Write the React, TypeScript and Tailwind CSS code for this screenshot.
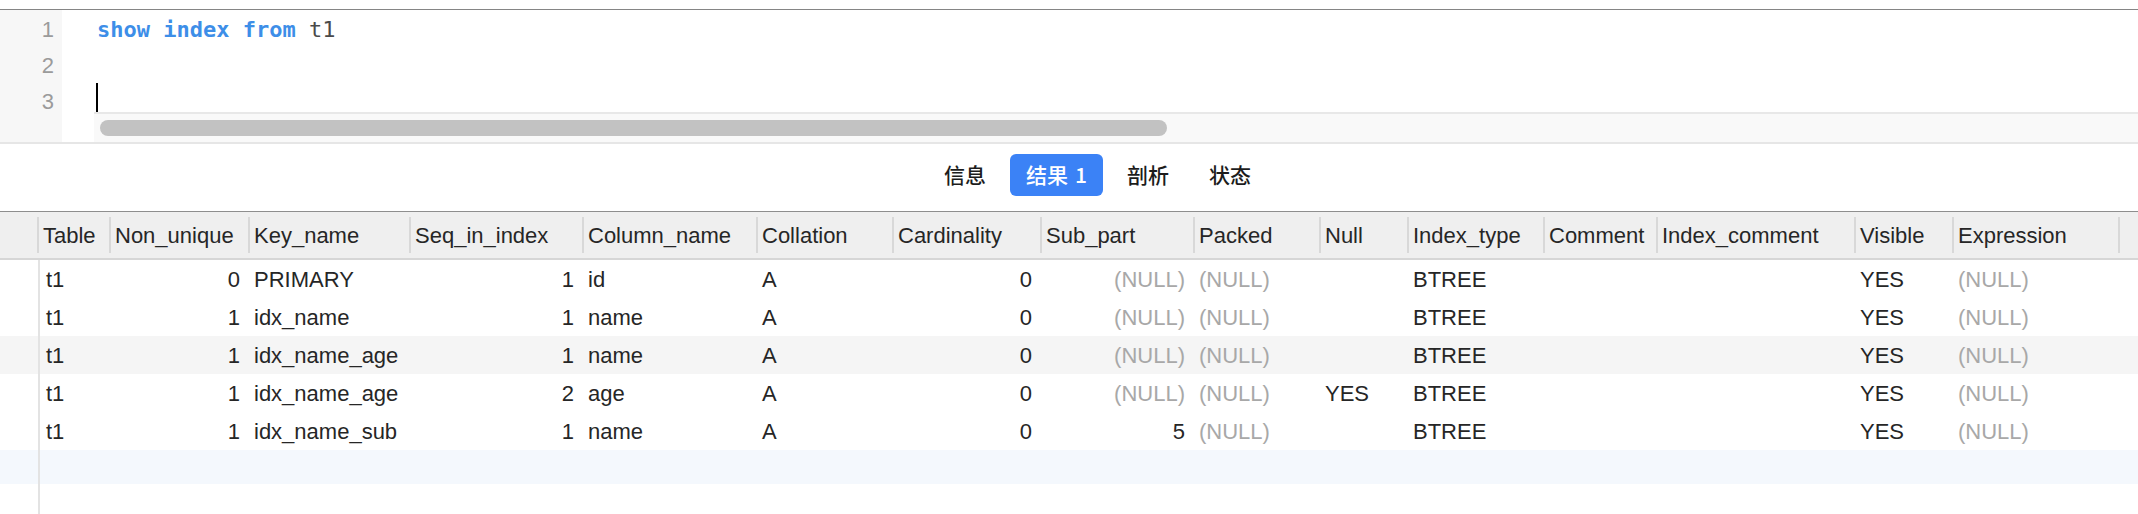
import React from 'react';

type Col = { name: string; width: number; align?: 'right' };

const columns: Col[] = [
  { name: 'Table', width: 72 },
  { name: 'Non_unique', width: 139, align: 'right' },
  { name: 'Key_name', width: 161 },
  { name: 'Seq_in_index', width: 173, align: 'right' },
  { name: 'Column_name', width: 174 },
  { name: 'Collation', width: 136 },
  { name: 'Cardinality', width: 148, align: 'right' },
  { name: 'Sub_part', width: 153, align: 'right' },
  { name: 'Packed', width: 126 },
  { name: 'Null', width: 88 },
  { name: 'Index_type', width: 136 },
  { name: 'Comment', width: 113 },
  { name: 'Index_comment', width: 198 },
  { name: 'Visible', width: 98 },
  { name: 'Expression', width: 166 },
];

const rows: (string | null)[][] = [
  ['t1', '0', 'PRIMARY', '1', 'id', 'A', '0', null, null, '', 'BTREE', '', '', 'YES', null],
  ['t1', '1', 'idx_name', '1', 'name', 'A', '0', null, null, '', 'BTREE', '', '', 'YES', null],
  ['t1', '1', 'idx_name_age', '1', 'name', 'A', '0', null, null, '', 'BTREE', '', '', 'YES', null],
  ['t1', '1', 'idx_name_age', '2', 'age', 'A', '0', null, null, 'YES', 'BTREE', '', '', 'YES', null],
  ['t1', '1', 'idx_name_sub', '1', 'name', 'A', '0', '5', null, '', 'BTREE', '', '', 'YES', null],
];

const tabs = ['信息', '结果 1', '剖析', '状态'];

function Editor() {
  return (
    <>
      <div className="h-[9px]" />
      <div className="h-px bg-[#858585]" />
      <div className="flex h-[132px]">
        <div className="w-[62px] bg-[#f7f7f7] pt-px font-['Liberation_Sans',sans-serif] text-[22px] text-[#9b9b9b]">
          {[1, 2, 3].map(n => (
            <div key={n} className="h-[36px] flex items-center justify-end pr-2">{n}</div>
          ))}
        </div>
        <div className="flex-1 flex flex-col pt-px font-['DejaVu_Sans_Mono',monospace] text-[22px]">
          <div className="h-[36px] flex items-center pl-[35px] whitespace-pre">
            <span className="font-bold text-[#3d8ee8]">show index from</span>
            <span className="text-[#4a4a4a]"> t1</span>
          </div>
          <div className="h-[36px]" />
          <div className="h-[29px] pl-[34px]">
            <div className="w-[2px] h-full bg-black" />
          </div>
          <div className="h-[30px] ml-[32px] border-t-2 border-[#e8e8e8] bg-[#f9f9f9] pt-[6px] pl-[6px]">
            <div className="w-[1067px] h-[16px] rounded-full bg-[#c2c2c2]" />
          </div>
        </div>
      </div>
      <div className="h-[2px] bg-[#e6e6e6]" />
    </>
  );
}

function Tabs() {
  return (
    <div className="h-[67px] flex items-start justify-center gap-2 pt-[10px] pl-[57px] font-['Noto_Sans_CJK_SC',sans-serif] text-[21px] font-medium">
      {tabs.map(t => {
        const active = t === '结果 1';
        const [label, num] = t.split(' ');
        return (
          <div
            key={t}
            className={
              active
                ? 'h-[42px] px-4 flex items-center rounded-[6px] bg-[#3b82f6] text-white'
                : 'h-[42px] px-4 flex items-center text-[#1c1c1c]'
            }
          >
            {label}
            {num && <span className="ml-[7px]">{num}</span>}
          </div>
        );
      })}
    </div>
  );
}

function ResultGrid() {
  return (
    <div className="flex-1 flex flex-col border-t border-[#8e8e8e] font-['Liberation_Sans',sans-serif] text-[22px] text-[#262626]">
      <div className="h-[48px] flex bg-[#efefef] border-b-2 border-[#d6d6d6]">
        <div className="w-[37px]" />
        {columns.map(c => (
          <div key={c.name} className="flex items-center" style={{ width: c.width }}>
            <div className="w-[2px] h-[36px] bg-[#d8d8d8]" />
            <span className="pl-1 whitespace-nowrap">{c.name}</span>
          </div>
        ))}
        <div className="flex-1 flex items-center">
          <div className="w-[2px] h-[36px] bg-[#d8d8d8]" />
        </div>
      </div>

      {rows.map((r, i) => (
        <div key={i} className={i === 2 ? 'h-[38px] flex bg-[#f5f5f5]' : 'h-[38px] flex'}>
          <div className="w-[40px] border-r-2 border-[#e3e3e3]" />
          {columns.map((c, j) => {
            const v = r[j];
            const w = j === 0 ? c.width - 3 : c.width;
            return (
              <div
                key={c.name}
                className={
                  c.align === 'right'
                    ? 'flex items-center justify-end pr-[8px] whitespace-nowrap'
                    : 'flex items-center pl-[6px] whitespace-nowrap'
                }
                style={{ width: w }}
              >
                {v === null ? <span className="text-[#a8a8a8]">(NULL)</span> : v}
              </div>
            );
          })}
        </div>
      ))}

      <div className="h-[34px] flex bg-[#f4f8fd]">
        <div className="w-[40px] border-r-2 border-[#e3e3e3]" />
      </div>
      <div className="flex-1 flex">
        <div className="w-[40px] border-r-2 border-[#e3e3e3]" />
      </div>
    </div>
  );
}

export default function App() {
  return (
    <div className="w-[2138px] h-[514px] bg-white overflow-hidden flex flex-col">
      <Editor />
      <Tabs />
      <ResultGrid />
    </div>
  );
}
